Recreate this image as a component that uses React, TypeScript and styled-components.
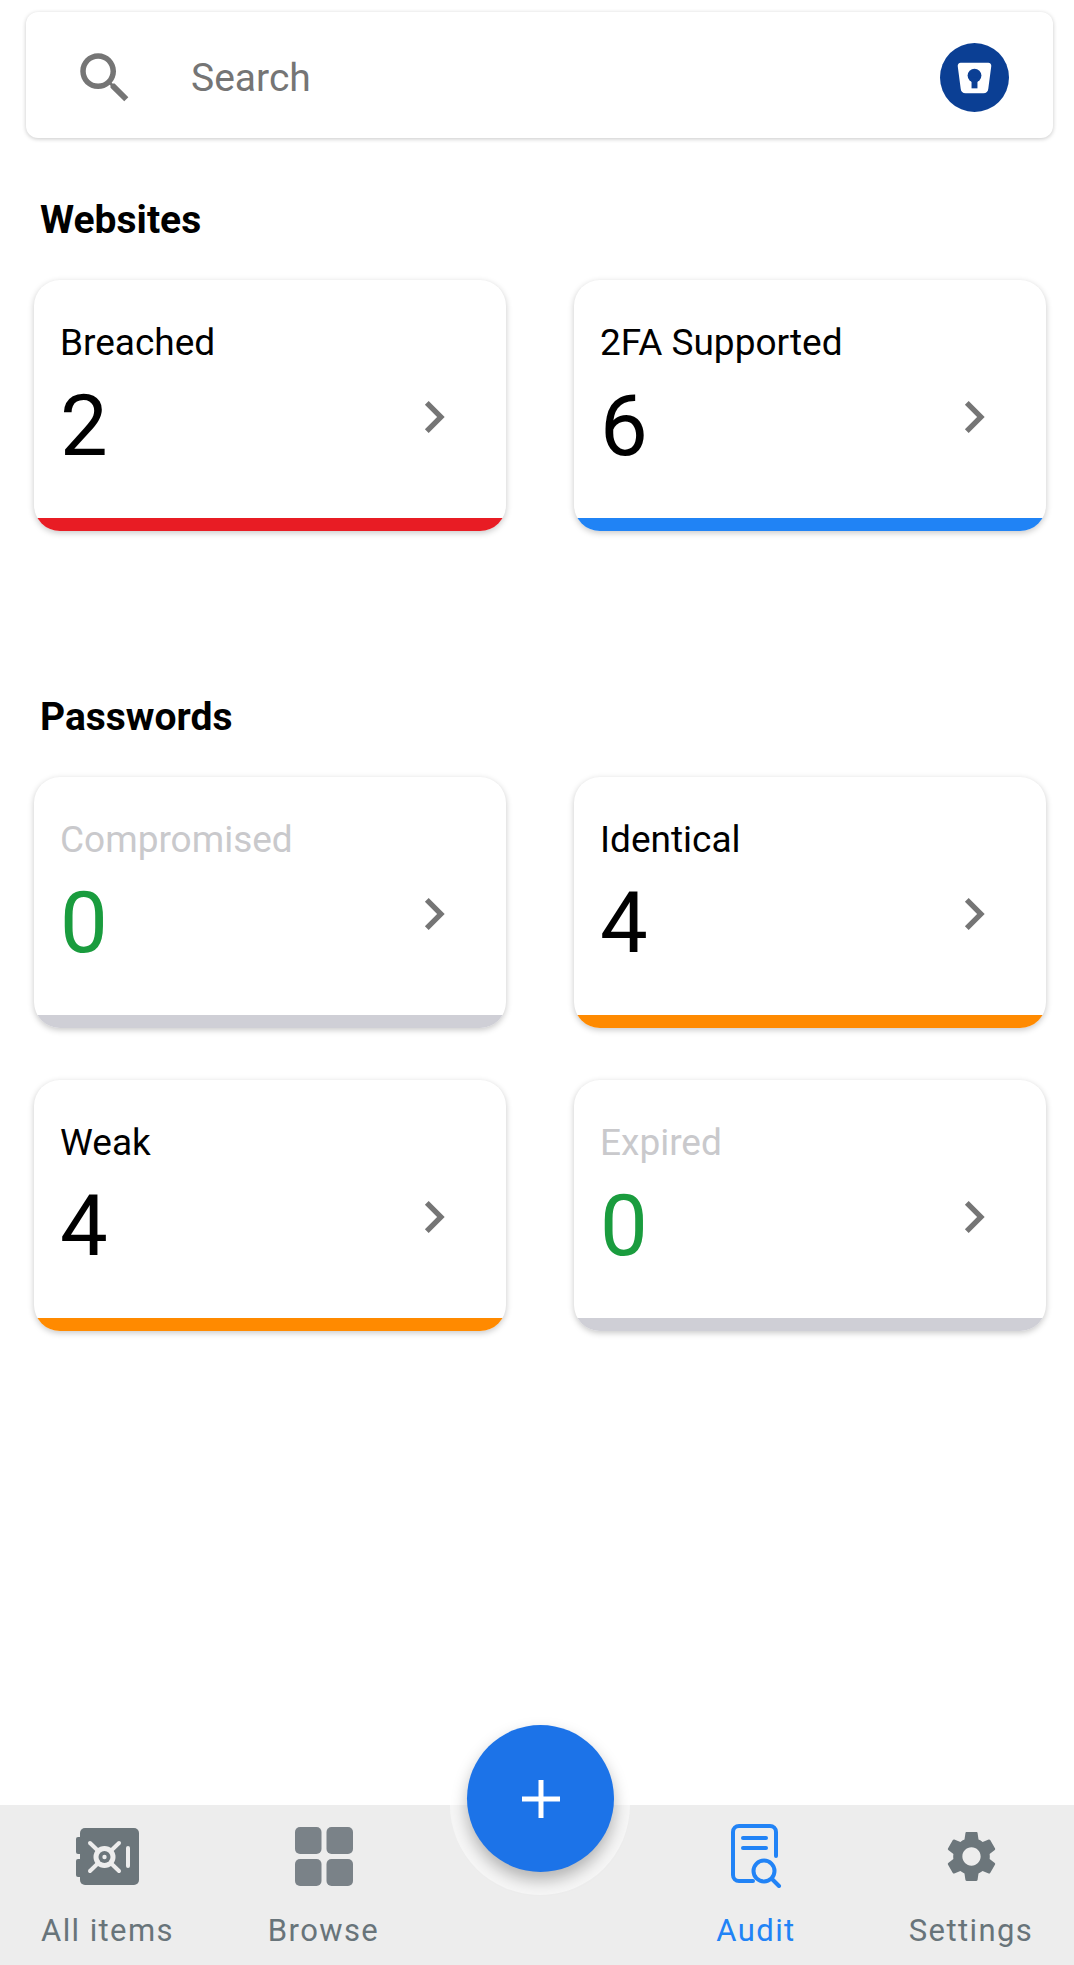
import React from "react";
import styled, { createGlobalStyle } from "styled-components";

const GlobalStyle = createGlobalStyle`
  html, body { margin: 0; padding: 0; background: #fff; }
  * { box-sizing: border-box; }
`;

const Page = styled.div`
  width: 1074px;
  height: 1965px;
  display: flex;
  flex-direction: column;
  font-family: Roboto, "Liberation Sans", sans-serif;
  background: #fff;
  overflow: hidden;
`;

const SearchBar = styled.div`
  height: 126px;
  margin: 12px 21px 0 26px;
  padding: 6px 44px 0 46px;
  display: flex;
  align-items: center;
  background: #fff;
  border-radius: 12px;
  box-shadow: 0 1px 4px rgba(0, 0, 0, 0.22);
`;

const SearchIcon = styled.svg`
  width: 66px;
  height: 66px;
  fill: #757575;
  flex: none;
`;

const SearchText = styled.span`
  margin-left: 53px;
  font-size: 39px;
  color: #757575;
  flex: 1;
`;

const Logo = styled.svg`
  width: 69px;
  height: 69px;
  flex: none;
  margin-top: -2px;
`;

const Heading = styled.h2<{ $top: number }>`
  margin: ${(p) => p.$top}px 0 0 40px;
  font-size: 39px;
  line-height: 48px;
  font-weight: 700;
  color: #000;
`;

const CardGrid = styled.div`
  margin: 36px 28px 0 34px;
  display: grid;
  grid-template-columns: 472px 472px;
  column-gap: 68px;
  row-gap: 52px;
`;

const Card = styled.div`
  height: 251px;
  display: flex;
  flex-direction: column;
  background: #fff;
  border-radius: 26px;
  overflow: hidden;
  box-shadow: 0 2px 6px rgba(0, 0, 0, 0.22);
`;

const CardBody = styled.div`
  flex: 1;
  padding: 41px 40px 0 26px;
  display: flex;
  flex-direction: column;
`;

const CardLabel = styled.div<{ $muted: boolean }>`
  font-size: 37px;
  line-height: 44px;
  color: ${(p) => (p.$muted ? "#c9c9cc" : "#000")};
`;

const CardRow = styled.div`
  margin-top: 8px;
  display: flex;
  align-items: flex-start;
  justify-content: space-between;
`;

const CardValue = styled.div<{ $zero: boolean }>`
  padding-top: 9px;
  font-size: 85px;
  line-height: 88px;
  color: ${(p) => (p.$zero ? "#1a9c3e" : "#000")};
`;

const Chevron = styled.svg`
  width: 64px;
  height: 64px;
  margin-top: 12px;
  fill: #757575;
`;

const Bar = styled.div<{ $color: string }>`
  height: 13px;
  background: ${(p) => p.$color};
`;

const Nav = styled.nav`
  position: relative;
  margin-top: auto;
  height: 160px;
  padding-top: 19px;
  background: #ededed;
  display: grid;
  grid-template-columns: 215px 217px 216px 216px 214px;
`;

const FabWell = styled.div`
  position: absolute;
  left: 450px;
  top: 0;
  width: 180px;
  height: 90px;
  background: #f6f6f6;
  border-radius: 0 0 90px 90px;
`;

const Fab = styled.button`
  position: absolute;
  left: 467px;
  top: -80px;
  width: 147px;
  height: 147px;
  padding: 0;
  border: none;
  border-radius: 50%;
  background: #1c73e8;
  display: flex;
  align-items: center;
  justify-content: center;
  box-shadow: 0 8px 16px rgba(0, 0, 0, 0.28);
`;

const NavItem = styled.div<{ $active?: boolean }>`
  display: flex;
  flex-direction: column;
  align-items: center;
  color: ${(p) => (p.$active ? "#2183f6" : "#68747a")};
`;

const NavSpacer = styled.div``;

const IconSlot = styled.div`
  height: 64px;
  display: flex;
  align-items: center;
  justify-content: center;
`;

const NavLabel = styled.span`
  margin-top: 23px;
  font-size: 31px;
  line-height: 40px;
  letter-spacing: 1.4px;
  white-space: nowrap;
`;

const BARS = { red: "#e81c24", blue: "#2083f5", orange: "#ff8a00", gray: "#cfcfd6" };

const ChevronIcon = () => (
  <Chevron viewBox="0 0 24 24">
    <path d="M8.59 16.59 13.17 12 8.59 7.41 10 6l6 6-6 6z" />
  </Chevron>
);

const StatCard = ({ label, value, bar }: { label: string; value: number; bar: string }) => (
  <Card>
    <CardBody>
      <CardLabel $muted={value === 0}>{label}</CardLabel>
      <CardRow>
        <CardValue $zero={value === 0}>{value}</CardValue>
        <ChevronIcon />
      </CardRow>
    </CardBody>
    <Bar $color={bar} />
  </Card>
);

const VaultIcon = () => (
  <svg width="63" height="57" viewBox="0 0 63 57">
    <rect x="4" y="0" width="59" height="57" rx="5" fill="#6c767b" />
    <rect x="0" y="9" width="8" height="17" rx="2" fill="#6c767b" />
    <rect x="0" y="31" width="8" height="18" rx="2" fill="#6c767b" />
    <g stroke="#ededed" strokeWidth="4" strokeLinecap="round">
      <line x1="14" y1="15" x2="43" y2="43" />
      <line x1="43" y1="15" x2="14" y2="43" />
    </g>
    <circle cx="28.5" cy="29" r="11" fill="#ededed" />
    <circle cx="28.5" cy="29" r="6" fill="#6c767b" />
    <circle cx="28.5" cy="29" r="2.2" fill="#ededed" />
    <rect x="50" y="18" width="4" height="22" rx="2" fill="#ededed" />
  </svg>
);

const BrowseIcon = () => (
  <svg width="58" height="59" viewBox="0 0 58 59" fill="#7a8288">
    <rect x="0" y="0" width="26.5" height="27" rx="5" />
    <rect x="31.5" y="0" width="26.5" height="27" rx="5" />
    <rect x="0" y="32" width="26.5" height="27" rx="5" />
    <rect x="31.5" y="32" width="26.5" height="27" rx="5" />
  </svg>
);

const AuditIcon = () => (
  <svg width="51" height="64" viewBox="0 0 51 64" fill="none" stroke="#2183f6" strokeWidth="4" strokeLinecap="round">
    <path d="M22 57H8a6 6 0 0 1-6-6V8a6 6 0 0 1 6-6h31a6 6 0 0 1 6 6v24" />
    <line x1="12" y1="14" x2="35" y2="14" />
    <line x1="12" y1="24" x2="35" y2="24" />
    <circle cx="33" cy="47" r="10.5" />
    <line x1="41" y1="55" x2="48" y2="62" />
  </svg>
);

const GearIcon = () => (
  <svg width="61" height="61" viewBox="0 0 24 24" fill="#6c767b">
    <path d="M19.14,12.94c0.04-0.3,0.06-0.61,0.06-0.94c0-0.32-0.02-0.64-0.07-0.94l2.03-1.58c0.18-0.14,0.23-0.41,0.12-0.61 l-1.92-3.32c-0.12-0.22-0.37-0.29-0.59-0.22l-2.39,0.96c-0.5-0.38-1.03-0.7-1.62-0.94L14.4,2.81c-0.04-0.24-0.24-0.41-0.48-0.41 h-3.84c-0.24,0-0.43,0.17-0.47,0.41L9.25,5.35C8.66,5.59,8.12,5.92,7.63,6.29L5.24,5.33c-0.22-0.08-0.47,0-0.59,0.22L2.74,8.87 C2.62,9.08,2.66,9.34,2.86,9.48l2.03,1.58C4.84,11.36,4.8,11.69,4.8,12s0.02,0.64,0.07,0.94l-2.03,1.58 c-0.18,0.14-0.23,0.41-0.12,0.61l1.92,3.32c0.12,0.22,0.37,0.29,0.59,0.22l2.39-0.96c0.5,0.38,1.03,0.7,1.62,0.94l0.36,2.54 c0.05,0.24,0.24,0.41,0.48,0.41h3.84c0.24,0,0.44-0.17,0.47-0.41l0.36-2.54c0.59-0.24,1.13-0.56,1.62-0.94l2.39,0.96 c0.22,0.08,0.47,0,0.59-0.22l1.92-3.32c0.12-0.22,0.07-0.47-0.12-0.61L19.14,12.94z M12,15.6c-1.98,0-3.6-1.62-3.6-3.6 s1.62-3.6,3.6-3.6s3.6,1.62,3.6,3.6S13.98,15.6,12,15.6z" />
  </svg>
);

export default function App() {
  return (
    <Page>
      <GlobalStyle />
      <SearchBar>
        <SearchIcon viewBox="0 0 24 24">
          <path d="M15.5 14h-.79l-.28-.27C15.41 12.59 16 11.11 16 9.5 16 5.91 13.09 3 9.5 3S3 5.91 3 9.5 5.91 16 9.5 16c1.61 0 3.09-.59 4.23-1.57l.27.28v.79l5 4.99L20.49 19l-4.99-5zm-6 0C7.01 14 5 11.99 5 9.5S7.01 5 9.5 5 14 7.01 14 9.5 11.99 14 9.5 14z" />
        </SearchIcon>
        <SearchText>Search</SearchText>
        <Logo viewBox="0 0 70 70">
          <circle cx="35" cy="35" r="35" fill="#0b3f94" />
          <path d="M21 20h28a3 3 0 0 1 3 3.5l-3 23a5 5 0 0 1-5 4.5H26a5 5 0 0 1-5-4.5l-3-23a3 3 0 0 1 3-3.5z" fill="#fff" />
          <circle cx="35" cy="33" r="7" fill="#0b3f94" />
          <rect x="32" y="35" width="6" height="11" fill="#0b3f94" />
        </Logo>
      </SearchBar>

      <Heading $top={58}>Websites</Heading>
      <CardGrid>
        <StatCard label="Breached" value={2} bar={BARS.red} />
        <StatCard label="2FA Supported" value={6} bar={BARS.blue} />
      </CardGrid>

      <Heading $top={162}>Passwords</Heading>
      <CardGrid>
        <StatCard label="Compromised" value={0} bar={BARS.gray} />
        <StatCard label="Identical" value={4} bar={BARS.orange} />
        <StatCard label="Weak" value={4} bar={BARS.orange} />
        <StatCard label="Expired" value={0} bar={BARS.gray} />
      </CardGrid>

      <Nav>
        <FabWell />
        <NavItem>
          <IconSlot><VaultIcon /></IconSlot>
          <NavLabel>All items</NavLabel>
        </NavItem>
        <NavItem>
          <IconSlot><BrowseIcon /></IconSlot>
          <NavLabel>Browse</NavLabel>
        </NavItem>
        <NavSpacer />
        <NavItem $active>
          <IconSlot><AuditIcon /></IconSlot>
          <NavLabel>Audit</NavLabel>
        </NavItem>
        <NavItem>
          <IconSlot><GearIcon /></IconSlot>
          <NavLabel>Settings</NavLabel>
        </NavItem>
        <Fab aria-label="Add">
          <svg width="38" height="38" viewBox="0 0 38 38" stroke="#fff" strokeWidth="5">
            <line x1="0" y1="19" x2="38" y2="19" />
            <line x1="19" y1="0" x2="19" y2="38" />
          </svg>
        </Fab>
      </Nav>
    </Page>
  );
}
